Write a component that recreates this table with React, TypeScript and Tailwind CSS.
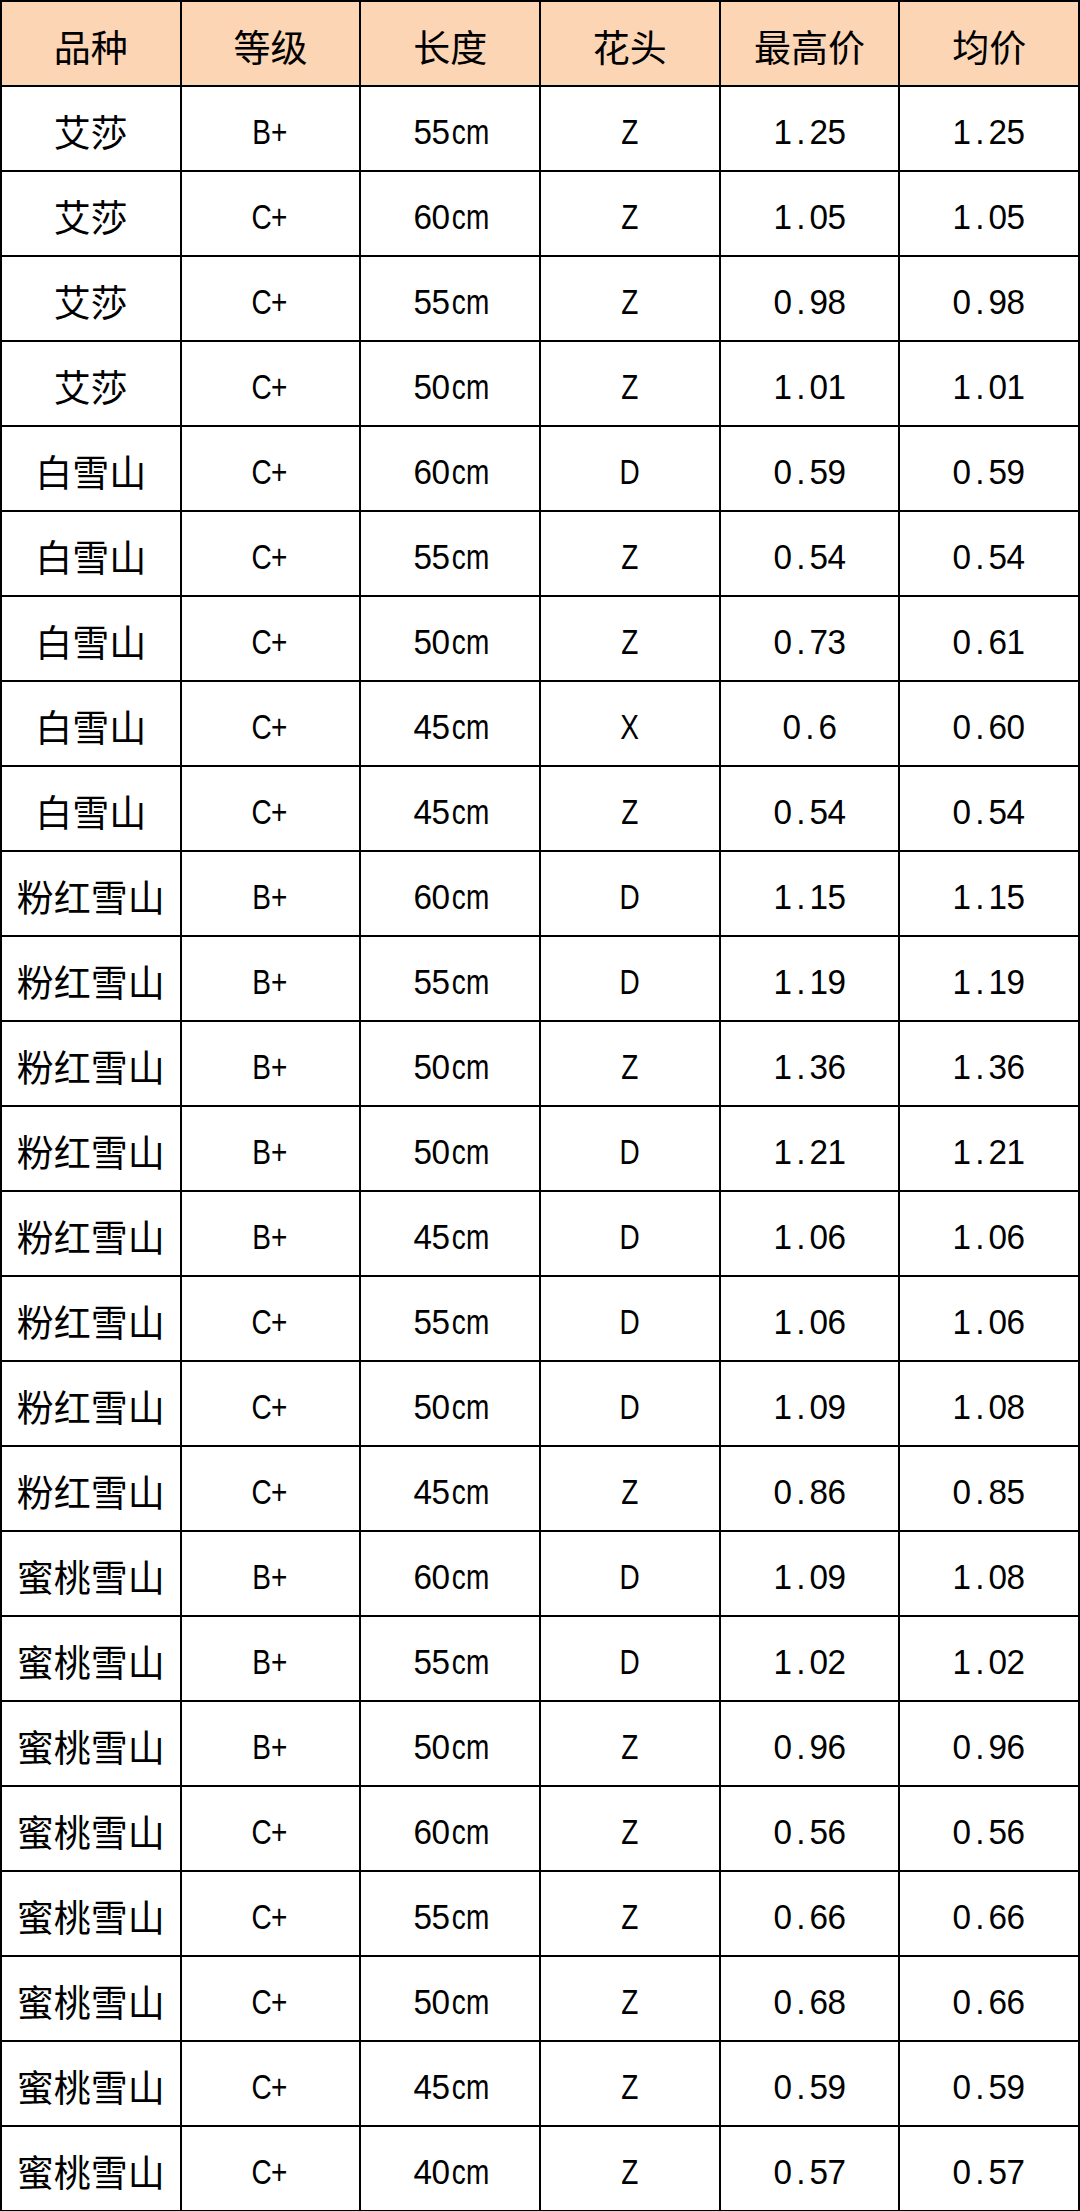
const headers = ['品种', '等级', '长度', '花头', '最高价', '均价']

const rows: string[][] = [
  ['艾莎', 'B+', '55cm', 'Z', '1.25', '1.25'],
  ['艾莎', 'C+', '60cm', 'Z', '1.05', '1.05'],
  ['艾莎', 'C+', '55cm', 'Z', '0.98', '0.98'],
  ['艾莎', 'C+', '50cm', 'Z', '1.01', '1.01'],
  ['白雪山', 'C+', '60cm', 'D', '0.59', '0.59'],
  ['白雪山', 'C+', '55cm', 'Z', '0.54', '0.54'],
  ['白雪山', 'C+', '50cm', 'Z', '0.73', '0.61'],
  ['白雪山', 'C+', '45cm', 'X', '0.6', '0.60'],
  ['白雪山', 'C+', '45cm', 'Z', '0.54', '0.54'],
  ['粉红雪山', 'B+', '60cm', 'D', '1.15', '1.15'],
  ['粉红雪山', 'B+', '55cm', 'D', '1.19', '1.19'],
  ['粉红雪山', 'B+', '50cm', 'Z', '1.36', '1.36'],
  ['粉红雪山', 'B+', '50cm', 'D', '1.21', '1.21'],
  ['粉红雪山', 'B+', '45cm', 'D', '1.06', '1.06'],
  ['粉红雪山', 'C+', '55cm', 'D', '1.06', '1.06'],
  ['粉红雪山', 'C+', '50cm', 'D', '1.09', '1.08'],
  ['粉红雪山', 'C+', '45cm', 'Z', '0.86', '0.85'],
  ['蜜桃雪山', 'B+', '60cm', 'D', '1.09', '1.08'],
  ['蜜桃雪山', 'B+', '55cm', 'D', '1.02', '1.02'],
  ['蜜桃雪山', 'B+', '50cm', 'Z', '0.96', '0.96'],
  ['蜜桃雪山', 'C+', '60cm', 'Z', '0.56', '0.56'],
  ['蜜桃雪山', 'C+', '55cm', 'Z', '0.66', '0.66'],
  ['蜜桃雪山', 'C+', '50cm', 'Z', '0.68', '0.66'],
  ['蜜桃雪山', 'C+', '45cm', 'Z', '0.59', '0.59'],
  ['蜜桃雪山', 'C+', '40cm', 'Z', '0.57', '0.57'],
]

// half-width chars in the sheet font are fixed-pitch and a bit condensed,
// so give each one its own 18px slot
function Mono({ text }: { text: string }) {
  return (
    <span className="flex font-['Liberation_Sans',Arial,sans-serif] text-[35px] leading-none">
      {text.split('').map((ch, i) => (
        <span key={i} className="inline-flex w-[18px] justify-center">
          <span className={/[0-9.]/.test(ch) ? 'inline-block scale-x-[0.95]' : 'inline-block scale-x-[0.8]'}>
            {ch}
          </span>
        </span>
      ))}
    </span>
  )
}

function Cell({ children, head }: { children: React.ReactNode; head?: boolean }) {
  return (
    <div
      className={`flex h-[83px] items-center justify-center pt-[6px] text-black ${
        head ? 'bg-[#fcd5b4]' : 'bg-white'
      }`}
    >
      {children}
    </div>
  )
}

export default function App() {
  return (
    <div className="w-[1080px] bg-white font-['Noto_Sans_CJK_SC',sans-serif]">
      <div className="grid grid-cols-6 gap-[2px] bg-black p-[2px]">
        {headers.map((h) => (
          <Cell key={h} head>
            <span className="text-[37px] leading-none">{h}</span>
          </Cell>
        ))}
        {rows.map((r, ri) =>
          r.map((v, ci) => (
            <Cell key={`${ri}-${ci}`}>
              {ci === 0 ? <span className="text-[37px] leading-none">{v}</span> : <Mono text={v} />}
            </Cell>
          )),
        )}
      </div>
    </div>
  )
}
